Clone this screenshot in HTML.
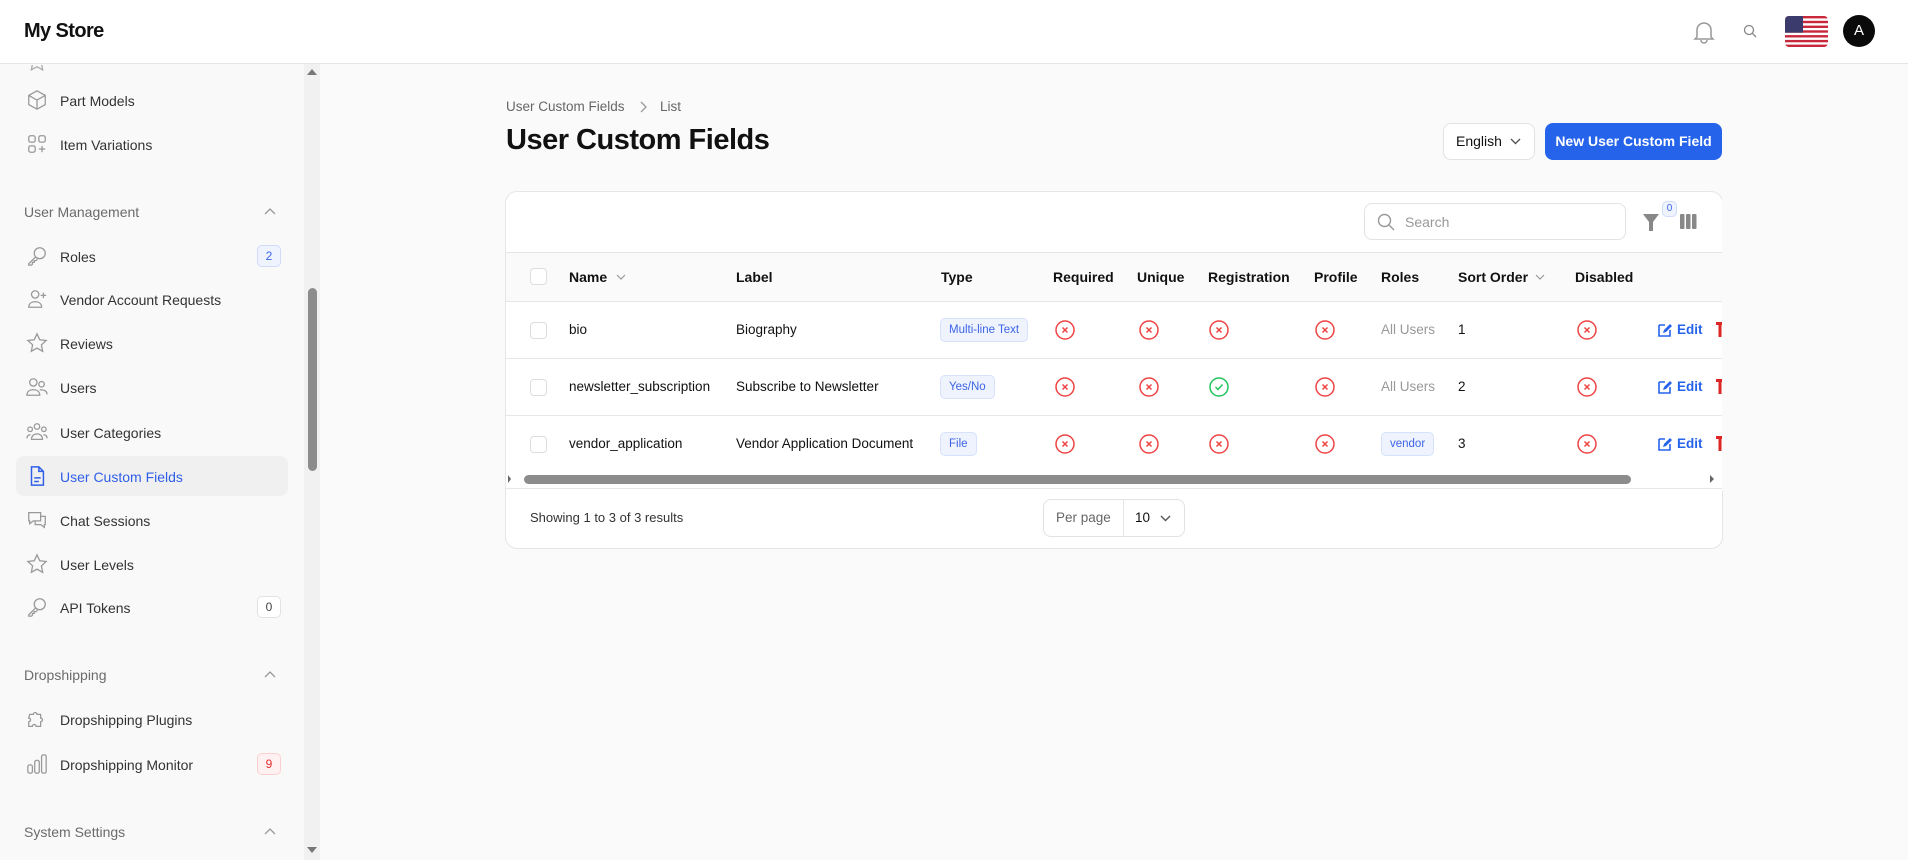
<!DOCTYPE html>
<html><head><meta charset="utf-8"><style>
*{box-sizing:border-box;margin:0;padding:0}
body{width:1908px;height:860px;overflow:hidden;background:#fafafa;font-family:"Liberation Sans",Arial,sans-serif;color:#111;position:relative}
.a{position:absolute}
.hdr{left:0;top:0;width:1908px;height:64px;background:#fff;border-bottom:1px solid #e5e5e5;z-index:2}
.side{left:0;top:64px;width:320px;height:796px;background:#f9f9f9}
.track{left:304px;top:64px;width:16px;height:796px;background:#f1f1f1}
.nav{position:absolute;left:60px;font-size:14px;color:#333;line-height:20px}
.ic{position:absolute;left:26px;width:22px;height:22px}
.sec{position:absolute;left:24px;font-size:14px;color:#6b6b6b}
.chev{position:absolute;left:264px}
.badge{position:absolute;left:257px;width:24px;height:22px;border-radius:5px;font-size:12px;text-align:center;line-height:20px}
.card{left:505px;top:191px;width:1218px;height:358px;background:#fff;border:1px solid #e6e6e6;border-radius:12px;overflow:hidden}
.th{position:absolute;top:268px;font-size:14px;font-weight:bold;line-height:18px}
.td{position:absolute;font-size:13.5px;line-height:18px;color:#111}
.cb{position:absolute;left:530px;width:17px;height:17px;border:1px solid #ddd;border-radius:4px;background:#fff}
.tag{position:absolute;height:24px;padding:0 8px;border-radius:5px;background:#eef3fe;border:1px solid #d6e2fb;color:#3d64e6;font-size:11.5px;line-height:22px}
.hl{position:absolute;left:506px;width:1216px;height:1px;background:#e6e6e6}
</style></head><body>
<div class="a hdr"></div>
<div class="a" style="left:24px;top:20px;font-size:20px;font-weight:bold;letter-spacing:-0.6px;z-index:3">My Store</div>
<svg class="a" style="left:1693px;top:20px;z-index:3" width="22" height="24" viewBox="0 0 22 24" fill="none" stroke="#999" stroke-width="1.5"><path d="M4 17V10a7 7 0 0 1 14 0v7l2 2H2z"/><path d="M8 20a3 3 0 0 0 6 0"/></svg>
<svg class="a" style="left:1743px;top:24px;z-index:3" width="14" height="14" viewBox="0 0 14 14" fill="none" stroke="#888" stroke-width="1.3"><circle cx="6" cy="6" r="4.5"/><path d="M9.5 9.5l3.5 3.5"/></svg>
<svg class="a" style="left:1785px;top:16px;z-index:3" width="43" height="31" viewBox="0 0 43 31"><defs><clipPath id="f"><rect width="43" height="31" rx="4"/></clipPath></defs><g clip-path="url(#f)"><rect width="43" height="31" fill="#fff"/><g fill="#c8283c"><rect y="0" width="43" height="2.4"/><rect y="4.8" width="43" height="2.4"/><rect y="9.6" width="43" height="2.4"/><rect y="14.3" width="43" height="2.4"/><rect y="19.1" width="43" height="2.4"/><rect y="23.9" width="43" height="2.4"/><rect y="28.6" width="43" height="2.4"/></g><rect width="18" height="16.7" fill="#3c3b6e"/></g></svg>
<div class="a" style="left:1843px;top:15px;width:32px;height:32px;border-radius:50%;background:#0a0a0a;color:#fff;font-size:15px;text-align:center;line-height:32px;z-index:3">A</div>

<div class="a side"></div>
<div class="a track"></div>
<div class="a" style="left:308px;top:288px;width:9px;height:183px;border-radius:5px;background:#8c8c8c"></div>
<svg class="a" style="left:307px;top:69px" width="10" height="6"><path d="M0 6L5 0L10 6z" fill="#777"/></svg>
<svg class="a" style="left:307px;top:847px" width="10" height="6"><path d="M0 0L5 6L10 0z" fill="#777"/></svg>

<svg class="ic" style="top:65px;height:6px" viewBox="0 16 24 6" fill="none" stroke="#aaa" stroke-width="1.4"><path d="M12 2l3 6.5 7 .8-5.2 4.8 1.4 7L12 17.6 5.8 21l1.4-7L2 9.3l7-.8z"/></svg>

<div class="a" style="left:16px;top:456px;width:272px;height:40px;border-radius:8px;background:#f0f0f0"></div>

<svg class="ic" style="top:89px" viewBox="0 0 24 24" fill="none" stroke="#999" stroke-width="1.4"><path d="M12 2l9 5v10l-9 5-9-5V7z"/><path d="M3 7l9 5 9-5M12 12v10"/></svg>
<div class="nav" style="top:91px">Part Models</div>
<svg class="ic" style="top:133px" viewBox="0 0 24 24" fill="none" stroke="#999" stroke-width="1.4"><rect x="3" y="3" width="7" height="7" rx="2"/><rect x="14" y="3" width="7" height="7" rx="2"/><rect x="3" y="14" width="7" height="7" rx="2"/><path d="M17.5 14v7M14 17.5h7"/></svg>
<div class="nav" style="top:135px">Item Variations</div>

<div class="sec" style="top:204px">User Management</div>
<svg class="chev" style="top:207px" width="12" height="8" fill="none" stroke="#999" stroke-width="1.3"><path d="M1 7l5-5 5 5"/></svg>

<svg class="ic" style="top:245px" viewBox="0 0 24 24" fill="none" stroke="#999" stroke-width="1.4"><circle cx="15" cy="9" r="6"/><path d="M10.5 13L3 20.5V22h3l1-1v-2h2v-2h2l1.5-1.5"/></svg>
<div class="nav" style="top:247px">Roles</div>
<div class="badge" style="top:245px;background:#eef3fe;border:1px solid #cfdcfa;color:#3d64e6">2</div>
<svg class="ic" style="top:288px" viewBox="0 0 24 24" fill="none" stroke="#999" stroke-width="1.4"><circle cx="10" cy="7" r="4"/><path d="M3 21c0-4 3-6 7-6s7 2 7 6z"/><path d="M19 5v6M16 8h6"/></svg>
<div class="nav" style="top:290px">Vendor Account Requests</div>
<svg class="ic" style="top:332px" viewBox="0 0 24 24" fill="none" stroke="#999" stroke-width="1.4"><path d="M12 2l3 6.5 7 .8-5.2 4.8 1.4 7L12 17.6 5.8 21l1.4-7L2 9.3l7-.8z"/></svg>
<div class="nav" style="top:334px">Reviews</div>
<svg class="ic" style="top:376px" viewBox="0 0 24 24" fill="none" stroke="#999" stroke-width="1.4"><circle cx="8" cy="7" r="4"/><circle cx="17" cy="9" r="3"/><path d="M1 21c0-4 3-6 7-6s7 2 7 6zM15 15c4 0 8 1 8 5"/></svg>
<div class="nav" style="top:378px">Users</div>
<svg class="ic" style="top:421px" viewBox="0 0 24 24" fill="none" stroke="#999" stroke-width="1.4"><circle cx="12" cy="6" r="3"/><circle cx="4.5" cy="9" r="2.5"/><circle cx="19.5" cy="9" r="2.5"/><path d="M6 20c0-4 3-6 6-6s6 2 6 6zM1 19c0-3 2-4 4-4M23 19c0-3-2-4-4-4"/></svg>
<div class="nav" style="top:423px">User Categories</div>
<svg class="ic" style="top:465px" viewBox="0 0 24 24" fill="none" stroke="#2f5fe8" stroke-width="1.6"><path d="M6 2h8l5 5v15H6z"/><path d="M14 2v5h5M9 14h7M9 18h5"/></svg>
<div class="nav" style="top:467px;color:#2f5fe8">User Custom Fields</div>
<svg class="ic" style="top:509px" viewBox="0 0 24 24" fill="none" stroke="#999" stroke-width="1.4"><path d="M3 4h13v9H8l-4 3v-3H3z"/><path d="M16 8h5v9h-1v3l-4-3h-6v-4"/></svg>
<div class="nav" style="top:511px">Chat Sessions</div>
<svg class="ic" style="top:553px" viewBox="0 0 24 24" fill="none" stroke="#999" stroke-width="1.4"><path d="M12 2l3 6.5 7 .8-5.2 4.8 1.4 7L12 17.6 5.8 21l1.4-7L2 9.3l7-.8z"/></svg>
<div class="nav" style="top:555px">User Levels</div>
<svg class="ic" style="top:596px" viewBox="0 0 24 24" fill="none" stroke="#999" stroke-width="1.4"><circle cx="15" cy="9" r="6"/><path d="M10.5 13L3 20.5V22h3l1-1v-2h2v-2h2l1.5-1.5"/></svg>
<div class="nav" style="top:598px">API Tokens</div>
<div class="badge" style="top:596px;background:#fff;border:1px solid #e2e2e2;color:#444">0</div>

<div class="sec" style="top:667px">Dropshipping</div>
<svg class="chev" style="top:670px" width="12" height="8" fill="none" stroke="#999" stroke-width="1.3"><path d="M1 7l5-5 5 5"/></svg>
<svg class="ic" style="top:708px" viewBox="0 0 24 24" fill="none" stroke="#999" stroke-width="1.4"><path d="M4 7h4a2 2 0 1 1 4 0h4v4a2 2 0 1 1 0 4v5h-5a2 2 0 1 0-4 0H3v-5a2 2 0 1 0 0-4z"/></svg>
<div class="nav" style="top:710px">Dropshipping Plugins</div>
<svg class="ic" style="top:753px" viewBox="0 0 24 24" fill="none" stroke="#999" stroke-width="1.4"><rect x="2" y="13" width="5" height="9" rx="2"/><rect x="9.5" y="8" width="5" height="14" rx="2"/><rect x="17" y="2" width="5" height="20" rx="2"/></svg>
<div class="nav" style="top:755px">Dropshipping Monitor</div>
<div class="badge" style="top:753px;background:#fff1f1;border:1px solid #fbd0d0;color:#e03030">9</div>
<div class="sec" style="top:824px">System Settings</div>
<svg class="chev" style="top:827px" width="12" height="8" fill="none" stroke="#999" stroke-width="1.3"><path d="M1 7l5-5 5 5"/></svg>

<div class="a" style="left:506px;top:99px;font-size:13.5px;color:#666">User Custom Fields</div>
<svg class="a" style="left:639px;top:101px" width="8" height="12" fill="none" stroke="#999" stroke-width="1.3"><path d="M2 1l5 5-5 5"/></svg>
<div class="a" style="left:660px;top:99px;font-size:13.5px;color:#666">List</div>
<div class="a" style="left:506px;top:124px;font-size:29px;font-weight:bold;letter-spacing:-0.5px">User Custom Fields</div>
<div class="a" style="left:1443px;top:123px;width:92px;height:37px;background:#fff;border:1px solid #e2e2e2;border-radius:8px;font-size:14px;line-height:35px;padding-left:12px">English</div>
<svg class="a" style="left:1510px;top:138px" width="11" height="7" fill="none" stroke="#555" stroke-width="1.4"><path d="M1 1l4.5 4.5L10 1"/></svg>
<div class="a" style="left:1545px;top:123px;width:177px;height:37px;background:#2563eb;border-radius:8px;color:#fff;font-size:14px;font-weight:bold;text-align:center;line-height:37px">New User Custom Field</div>

<div class="a card"></div>
<div class="a" style="left:1364px;top:203px;width:262px;height:37px;border:1px solid #e2e2e2;border-radius:8px;background:#fff"></div>
<svg class="a" style="left:1377px;top:213px" width="18" height="18" fill="none" stroke="#999" stroke-width="1.4"><circle cx="7.5" cy="7.5" r="6"/><path d="M12 12l5 5"/></svg>
<div class="a" style="left:1405px;top:214px;font-size:14px;color:#999">Search</div>
<svg class="a" style="left:1643px;top:214px" width="16" height="17"><path d="M0 0h16l-6 8v9h-4V8z" fill="#888"/></svg>
<div class="a" style="left:1662px;top:201px;width:15px;height:16px;border-radius:5px;background:#eef3fe;border:1px solid #cfdcfa;color:#3d64e6;font-size:10px;text-align:center;line-height:14px">0</div>
<svg class="a" style="left:1680px;top:214px" width="17" height="15"><rect x="0" y="0" width="4.5" height="15" rx="1" fill="#888"/><rect x="6" y="0" width="4.5" height="15" rx="1" fill="#888"/><rect x="12" y="0" width="4.5" height="15" rx="1" fill="#888"/></svg>

<div class="a" style="left:506px;top:252px;width:1216px;height:49px;background:#fafafa"></div>
<div class="hl" style="top:252px"></div>
<div class="hl" style="top:301px"></div>
<div class="hl" style="top:358px"></div>
<div class="hl" style="top:415px"></div>
<div class="hl" style="top:488px"></div>

<div class="cb" style="top:268px"></div>
<div class="th" style="left:569px">Name</div>
<svg class="a" style="left:616px;top:274px" width="10" height="6" fill="none" stroke="#999" stroke-width="1.2"><path d="M1 1l4 4 4-4"/></svg>
<div class="th" style="left:736px">Label</div>
<div class="th" style="left:941px">Type</div>
<div class="th" style="left:1053px">Required</div>
<div class="th" style="left:1137px">Unique</div>
<div class="th" style="left:1208px">Registration</div>
<div class="th" style="left:1314px">Profile</div>
<div class="th" style="left:1381px">Roles</div>
<div class="th" style="left:1458px">Sort Order</div>
<svg class="a" style="left:1535px;top:274px" width="10" height="6" fill="none" stroke="#999" stroke-width="1.2"><path d="M1 1l4 4 4-4"/></svg>
<div class="th" style="left:1575px">Disabled</div>

<div class="cb" style="top:322px"></div>
<div class="td" style="left:569px;top:321px">bio</div>
<div class="td" style="left:736px;top:321px">Biography</div>
<div class="tag" style="left:940px;top:318px">Multi-line Text</div>
<div class="td" style="left:1381px;top:321px;color:#999">All Users</div>
<div class="td" style="left:1458px;top:321px">1</div>

<div class="cb" style="top:379px"></div>
<div class="td" style="left:569px;top:378px">newsletter_subscription</div>
<div class="td" style="left:736px;top:378px">Subscribe to Newsletter</div>
<div class="tag" style="left:940px;top:375px">Yes/No</div>
<div class="td" style="left:1381px;top:378px;color:#999">All Users</div>
<div class="td" style="left:1458px;top:378px">2</div>

<div class="cb" style="top:436px"></div>
<div class="td" style="left:569px;top:435px">vendor_application</div>
<div class="td" style="left:736px;top:435px">Vendor Application Document</div>
<div class="tag" style="left:940px;top:432px">File</div>
<div class="tag" style="left:1381px;top:432px">vendor</div>
<div class="td" style="left:1458px;top:435px">3</div>

<svg class="a" style="left:0;top:0" width="1908" height="500">
<defs>
<g id="x"><circle r="9" fill="none" stroke="#ef4444" stroke-width="1.5"/><path d="M-2.5 -2.5L2.5 2.5M2.5 -2.5L-2.5 2.5" stroke="#ef4444" stroke-width="1.5"/></g>
<g id="ok"><circle r="9" fill="none" stroke="#22c55e" stroke-width="1.5"/><path d="M-3.5 0L-1 2.5L3.5 -2.5" fill="none" stroke="#22c55e" stroke-width="1.5"/></g>
<g id="ed"><path d="M-7 -5h6M-7 -5v11h11v-6" fill="none" stroke="#2563eb" stroke-width="1.6"/><path d="M-3 3l1-3 6-6 2 2-6 6z" fill="#2563eb"/></g>
<g id="tr"><path d="M0 -8h8v3h-2.5v12h-3v-12H0z" fill="#dc2626"/></g>
</defs>
<use href="#x" x="1065" y="330"/><use href="#x" x="1149" y="330"/><use href="#x" x="1219" y="330"/><use href="#x" x="1325" y="330"/><use href="#x" x="1587" y="330"/>
<use href="#x" x="1065" y="387"/><use href="#x" x="1149" y="387"/><use href="#ok" x="1219" y="387"/><use href="#x" x="1325" y="387"/><use href="#x" x="1587" y="387"/>
<use href="#x" x="1065" y="444"/><use href="#x" x="1149" y="444"/><use href="#x" x="1219" y="444"/><use href="#x" x="1325" y="444"/><use href="#x" x="1587" y="444"/>
<use href="#ed" x="1666" y="330"/><use href="#ed" x="1666" y="387"/><use href="#ed" x="1666" y="444"/>
<use href="#tr" x="1716" y="330"/><use href="#tr" x="1716" y="387"/><use href="#tr" x="1716" y="444"/>
<path d="M511 479l-3 -4v8z" fill="#666"/>
<path d="M1710 475v8l4-4z" fill="#666"/>
<rect x="524" y="475" width="1107" height="9" rx="4.5" fill="#8c8c8c"/>
<rect x="1722" y="191" width="2" height="300" fill="#fafafa"/>
</svg>
<div class="td" style="left:1677px;top:321px;color:#2563eb;font-weight:bold">Edit</div>
<div class="td" style="left:1677px;top:378px;color:#2563eb;font-weight:bold">Edit</div>
<div class="td" style="left:1677px;top:435px;color:#2563eb;font-weight:bold">Edit</div>

<div class="a" style="left:530px;top:510px;font-size:13px;color:#333">Showing 1 to 3 of 3 results</div>
<div class="a" style="left:1043px;top:499px;width:142px;height:38px;border:1px solid #e2e2e2;border-radius:8px;background:#fff"></div>
<div class="a" style="left:1123px;top:500px;width:1px;height:36px;background:#e6e6e6"></div>
<div class="a" style="left:1056px;top:510px;font-size:13.5px;color:#666">Per page</div>
<div class="a" style="left:1135px;top:510px;font-size:13.5px;color:#111">10</div>
<svg class="a" style="left:1160px;top:515px" width="11" height="7" fill="none" stroke="#555" stroke-width="1.4"><path d="M1 1l4.5 4.5L10 1"/></svg>
</body></html>
